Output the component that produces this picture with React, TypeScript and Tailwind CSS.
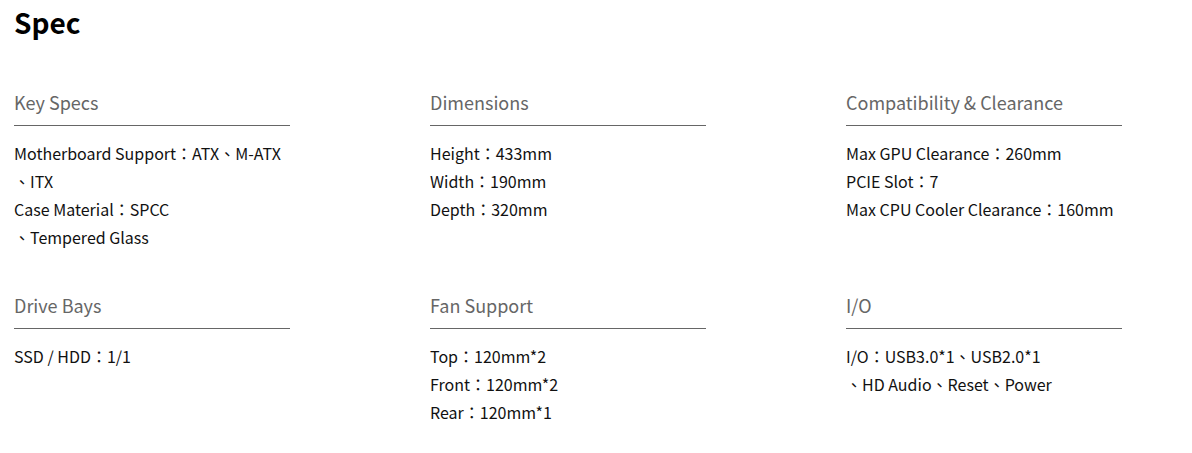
const FONT = '"Noto Sans CJK TC", "Noto Sans", sans-serif'

interface SpecGroup {
  title: string
  lines: string[]
}

const groups: SpecGroup[] = [
  {
    title: 'Key Specs',
    lines: ['Motherboard Support：ATX、M-ATX', '、ITX', 'Case Material：SPCC', '、Tempered Glass'],
  },
  {
    title: 'Dimensions',
    lines: ['Height：433mm', 'Width：190mm', 'Depth：320mm'],
  },
  {
    title: 'Compatibility & Clearance',
    lines: ['Max GPU Clearance：260mm', 'PCIE Slot：7', 'Max CPU Cooler Clearance：160mm'],
  },
  {
    title: 'Drive Bays',
    lines: ['SSD / HDD：1/1'],
  },
  {
    title: 'Fan Support',
    lines: ['Top：120mm*2', 'Front：120mm*2', 'Rear：120mm*1'],
  },
  {
    title: 'I/O',
    lines: ['I/O：USB3.0*1、USB2.0*1', '、HD Audio、Reset、Power'],
  },
]

function SpecBlock({ group }: { group: SpecGroup }) {
  return (
    <div>
      <div className="text-[18px] leading-[26px] text-[#666] pb-[10px] border-b border-[#666]">
        {group.title}
      </div>
      <div className="pt-[13px] text-[16px] leading-[28px] text-[#111]">
        {group.lines.map((l, i) => (
          <div key={i} className="whitespace-nowrap">{l}</div>
        ))}
      </div>
    </div>
  )
}

export default function App() {
  return (
    <div className="bg-white w-[1192px] h-[453px] px-[14px] pt-0" style={{ fontFamily: FONT }}>
      <h2 className="text-[28px] leading-[44px] font-bold text-black">Spec</h2>
      <div className="mt-[45px] grid grid-cols-[276px_276px_276px] gap-x-[140px] gap-y-[41px]">
        {groups.map(g => (
          <SpecBlock key={g.title} group={g} />
        ))}
      </div>
    </div>
  )
}
